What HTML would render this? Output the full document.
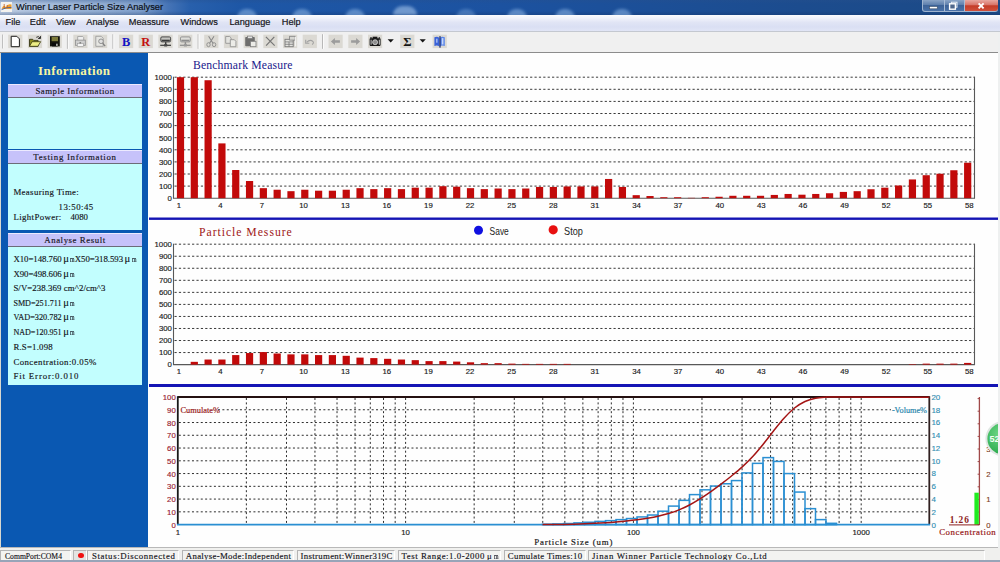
<!DOCTYPE html>
<html><head><meta charset="utf-8"><title>Winner Laser Particle Size Analyser</title>
<style>
html,body{margin:0;padding:0;}
body{width:1000px;height:562px;overflow:hidden;position:relative;background:#fefefe;font-family:"Liberation Sans",sans-serif;}
.abs{position:absolute;}
#title{left:0;top:0;width:1000px;height:14.6px;overflow:hidden;background:linear-gradient(90deg,#c2d0e4 0px,#a9bedc 40px,#93aed3 100px,#7f9fcb 140px,#4674b6 168px,#2860ac 190px,#1e57a6 240px,#1c52a0 500px,#1c4c8e 800px,#1c4a86 1000px);}
#title:before{content:"";position:absolute;left:0;top:0;width:1000px;height:14.6px;background:linear-gradient(180deg,rgba(40,80,140,.35) 0,rgba(40,80,140,0) 4px,rgba(20,50,100,0) 11px,rgba(20,50,100,.3) 14.6px)}
#title .cap{position:absolute;left:16px;top:1.4px;font-size:9.26px;line-height:13px;color:#0c1118;white-space:nowrap;-webkit-text-stroke:0.2px #0c1118}
.blob{position:absolute;top:8.5px;width:20px;height:9px;border-radius:9px 9px 0 0;background:#86b0e2;filter:blur(1.6px);opacity:.6}
#ico svg{display:block}
#ico{position:absolute;left:1px;top:2.4px;width:11px;height:9.6px;background:#f4f2ee;overflow:hidden}
#wb{position:absolute;left:922px;top:0;width:75.5px;height:12px;border-radius:0 0 3px 3px;border:1px solid #9fb4cf;border-top:0;box-sizing:border-box;background:linear-gradient(180deg,#8aa4c6 0,#5c7eac 45%,#3d6398 50%,#4a72a8 100%)}
#wb .cl{position:absolute;left:41.5px;top:0;width:33px;height:11px;border-radius:0 0 3px 0;background:linear-gradient(180deg,#e8a8a0 0,#d87468 45%,#c43c28 52%,#d0503a 100%)}
#wb i{position:absolute;top:0;width:1px;height:11px;background:#a8bcd6}
#rb{left:998.4px;top:32px;width:1.6px;height:516px;background:#eef0f0}
#menu{left:0;top:15px;width:1000px;height:16px;background:linear-gradient(180deg,#fbfcfe 0,#f1f3fb 20%,#e1e5f5 45%,#dadff3 75%,#e1e5f6 100%);border-bottom:1px solid #c4c8d0;box-sizing:content-box}
#menu span{position:absolute;top:1.1px;font-size:9.2px;line-height:13px;color:#16161a;white-space:nowrap;-webkit-text-stroke:0.2px #16161a}
#tool{left:0;top:32px;width:1000px;height:20px;background:#f0f0f0;border-bottom:1px solid #8c8c8c}
.tb{position:absolute;top:2.5px;width:14px;height:14px;background:#dcdad6;}
.sep{position:absolute;top:2px;width:1px;height:16px;background:#a8a8a8;}
#left{left:0;top:52.5px;width:148.4px;height:494px;background:#0a58b2;border-left:1.6px solid #d8d8d0;box-sizing:border-box}
.hd{position:absolute;left:8px;width:134px;height:14.4px;background:#c6c2fa;border-top:1px solid #eceaff;border-bottom:1px solid #6c6c78;box-sizing:border-box;text-align:center}
.cy{position:absolute;left:8px;width:134px;background:#c2fefe;}
.t,.hd span,.sb span{font-family:"Liberation Serif","Noto Serif CJK SC",serif;font-size:8.8px;line-height:11px;color:#141420;white-space:nowrap;-webkit-text-stroke:0.14px #141420}
.t{position:absolute;}
.hd>span{display:block;line-height:12.6px}
.mu{display:inline-block;width:8.78px;letter-spacing:0;text-align:center;font-family:"Liberation Serif",serif;font-size:10.6px;line-height:9px}
.m1{display:inline-block;width:4.39px;transform:scaleX(.66);transform-origin:0 50%}
#inf{position:absolute;left:38.1px;top:63.3px;font-family:"Liberation Serif",serif;font-weight:bold;font-size:13px;letter-spacing:0.41px;color:#f6f6a2;line-height:16px;white-space:nowrap}
#status{left:0;top:547px;width:1000px;height:15px;background:#f0f0ee;border-top:1px solid #b8b8b8;box-sizing:border-box}
.sb{position:absolute;top:2px;height:10.5px;border:1px solid #b4b4b4;border-right-color:#fff;border-bottom-color:#fff;box-sizing:border-box;background:#f3f3f1}
.sb>span{position:absolute;top:-0.2px}
#botline{left:0;top:560px;width:1000px;height:2px;background:#98a4b8}
svg text{font-family:"Liberation Sans",sans-serif}
.gd{stroke:#3a3a3a;stroke-width:1;stroke-dasharray:2.2 2.19}
.gd2{stroke:#2c2c2c;stroke-width:1;stroke-dasharray:2 2.39}
.ax{stroke:#585858;stroke-width:1.1}
.yl{font-size:7.8px;text-anchor:end;fill:#202020;stroke:#202020;stroke-width:0.15px}
.xl{font-size:7.8px;text-anchor:middle;fill:#202020;stroke:#202020;stroke-width:0.15px}
.vl{font-size:8px;fill:#2f8cb0;stroke:#2f8cb0;stroke-width:.12px}
.cl{font-size:7.8px;fill:#7c3c24;stroke:#7c3c24;stroke-width:.12px}
.cv{font:bold 9.4px "Liberation Serif",serif !important;fill:#8c1c1c}
.btn{font-size:10.8px;fill:#1c1c1c}
.ttl{font-family:"Liberation Serif",serif !important;font-size:11.7px}
.sm{font-family:"Liberation Serif",serif !important;font-size:8.8px}
.hb{fill:none;stroke:#2a8fd2;stroke-width:1.5}
</style></head>
<body>
<div id="title" class="abs">
<div class="blob" style="left:237px"></div><div class="blob" style="left:292px"></div><div class="blob" style="left:345px"></div><div class="blob" style="left:393px;width:24px;top:6px;background:#a6c6ec"></div><div class="blob" style="left:456px;opacity:.4"></div><div class="blob" style="left:507px"></div><div class="blob" style="left:555px"></div><div class="blob" style="left:612px"></div>
<div id="ico"><svg width="11" height="9.6" viewBox="0 0 11 9.6"><path d="M0.5,6.8 q2.4,-5.4 4.4,-1.6 q1.6,-3.8 5.6,-2.6 v4.4 h-6 z" fill="#f0a030"/><path d="M0.6,7.6 q4,-2.4 9.8,-2.2" stroke="#3a5ea8" stroke-width="0.9" fill="none"/><path d="M3.2,2 v4 M6.2,3 v3" stroke="#c05a20" stroke-width="0.8"/></svg></div>
<div class="cap">Winner Laser Particle Size Analyser</div>
<div id="wb"><i style="left:20.5px"></i><i style="left:41px"></i><div class="cl"></div>
<svg style="position:absolute;left:0;top:0" width="75" height="12" viewBox="0 0 75 12"><rect x="6.6" y="6.6" width="7.6" height="2.2" fill="#fff" stroke="#3a4a60" stroke-width="0.5"/><rect x="28.4" y="2.2" width="5.6" height="5" fill="none" stroke="#e8eef6" stroke-width="1"/><rect x="26.6" y="3.8" width="5.8" height="5.4" fill="#50688c" stroke="#fff" stroke-width="1.4"/><path d="M55.6,3.4 l5,5 M60.6,3.4 l-5,5" stroke="#fff" stroke-width="1.9"/></svg></div>
</div>
<div id="menu" class="abs"><span style="left:5.6px">File</span><span style="left:29.8px">Edit</span><span style="left:56px">View</span><span style="left:86.3px">Analyse</span><span style="left:128.8px">Meassure</span><span style="left:180.5px">Windows</span><span style="left:229.5px">Language</span><span style="left:281.8px">Help</span></div>
<div id="tool" class="abs"><!--TOOL--></div>
<div id="left" class="abs"></div>
<div id="inf">Information</div>
<div class="hd" style="top:83.6px"><span><span style="letter-spacing:0.47px">Sample Information</span></span></div>
<div class="cy" style="top:98px;height:50.6px"></div>
<div class="hd" style="top:150px"><span><span style="letter-spacing:0.71px">Testing Information</span></span></div>
<div class="cy" style="top:164.4px;height:65.2px"></div>
<div class="hd" style="top:232.8px"><span><span style="letter-spacing:0.57px">Analyse Result</span></span></div>
<div class="cy" style="top:247.2px;height:137.8px"></div>
<div class="t" style="left:13.4px;top:186.6px"><span style="letter-spacing:0.36px">Measuring Time:</span></div>
<div class="t" style="left:58.6px;top:201.7px"><span style="letter-spacing:0.48px">13:50:45</span></div>
<div class="t" style="left:13.4px;top:211.9px"><span style="letter-spacing:0.39px">LightPower:</span><span style="display:inline-block;width:8.78px"></span><span style="letter-spacing:-0.01px">4080</span></div>
<div class="t" style="left:13.4px;top:254.2px"><span style="letter-spacing:-0.04px">X10=148.760</span><span class="mu">μ</span><span class="m1">m</span><span style="letter-spacing:-0.04px">X50=318.593</span><span class="mu">μ</span><span class="m1">m</span></div>
<div class="t" style="left:13.4px;top:268.6px"><span style="letter-spacing:-0.04px">X90=498.606</span><span class="mu">μ</span><span class="m1">m</span></div>
<div class="t" style="left:13.4px;top:283.3px"><span style="letter-spacing:0.08px">S/V=238.369 cm^2/cm^3</span></div>
<div class="t" style="left:13.4px;top:298px"><span style="font-size:8.12px">SMD=251.711</span><span class="mu">μ</span><span class="m1">m</span></div>
<div class="t" style="left:13.4px;top:312.4px"><span style="font-size:8.25px">VAD=320.782</span><span class="mu">μ</span><span class="m1">m</span></div>
<div class="t" style="left:13.4px;top:327.2px"><span style="font-size:8.07px">NAD=120.951</span><span class="mu">μ</span><span class="m1">m</span></div>
<div class="t" style="left:13.4px;top:341.9px"><span style="letter-spacing:0.20px">R.S=1.098</span></div>
<div class="t" style="left:13.4px;top:356.6px"><span style="letter-spacing:0.44px">Concentration:0.05%</span></div>
<div class="t" style="left:13.4px;top:371.3px"><span style="letter-spacing:0.87px">Fit Error:0.010</span></div>
<svg class="abs" style="left:0;top:0" width="1000" height="562" viewBox="0 0 1000 562">
<defs><radialGradient id="gb" cx="40%" cy="35%" r="70%"><stop offset="0" stop-color="#6fd886"/><stop offset="1" stop-color="#27a84a"/></radialGradient></defs>
<g>
<line x1="174.5" y1="77.2" x2="974.5" y2="77.2" class="gd"/>
<line x1="174.5" y1="89.3" x2="974.5" y2="89.3" class="gd"/>
<line x1="174.5" y1="101.4" x2="974.5" y2="101.4" class="gd"/>
<line x1="174.5" y1="113.5" x2="974.5" y2="113.5" class="gd"/>
<line x1="174.5" y1="125.6" x2="974.5" y2="125.6" class="gd"/>
<line x1="174.5" y1="137.7" x2="974.5" y2="137.7" class="gd"/>
<line x1="174.5" y1="149.8" x2="974.5" y2="149.8" class="gd"/>
<line x1="174.5" y1="161.9" x2="974.5" y2="161.9" class="gd"/>
<line x1="174.5" y1="174" x2="974.5" y2="174" class="gd"/>
<line x1="174.5" y1="186.1" x2="974.5" y2="186.1" class="gd"/>
<line x1="173.5" y1="76.7" x2="173.5" y2="198.7" class="ax"/>
<line x1="974.5" y1="76.7" x2="974.5" y2="198.7" class="ax"/>
<line x1="173.5" y1="198.2" x2="974.5" y2="198.2" class="ax"/>
<rect x="176.9" y="77.2" width="7.2" height="121" fill="#c20a0a"/>
<rect x="190.71" y="77.2" width="7.2" height="121" fill="#c20a0a"/>
<rect x="204.52" y="80.23" width="7.2" height="117.97" fill="#c20a0a"/>
<rect x="218.33" y="143.39" width="7.2" height="54.81" fill="#c20a0a"/>
<rect x="232.14" y="170.01" width="7.2" height="28.19" fill="#c20a0a"/>
<rect x="245.95" y="181.02" width="7.2" height="17.18" fill="#c20a0a"/>
<rect x="259.76" y="188.16" width="7.2" height="10.04" fill="#c20a0a"/>
<rect x="273.57" y="189.73" width="7.2" height="8.47" fill="#c20a0a"/>
<rect x="287.38" y="191.18" width="7.2" height="7.02" fill="#c20a0a"/>
<rect x="301.19" y="189.73" width="7.2" height="8.47" fill="#c20a0a"/>
<rect x="315" y="190.7" width="7.2" height="7.5" fill="#c20a0a"/>
<rect x="328.81" y="190.7" width="7.2" height="7.5" fill="#c20a0a"/>
<rect x="342.62" y="189.73" width="7.2" height="8.47" fill="#c20a0a"/>
<rect x="356.43" y="188.16" width="7.2" height="10.04" fill="#c20a0a"/>
<rect x="370.24" y="189.12" width="7.2" height="9.07" fill="#c20a0a"/>
<rect x="384.05" y="188.16" width="7.2" height="10.04" fill="#c20a0a"/>
<rect x="397.86" y="189.12" width="7.2" height="9.07" fill="#c20a0a"/>
<rect x="411.67" y="187.67" width="7.2" height="10.53" fill="#c20a0a"/>
<rect x="425.48" y="187.67" width="7.2" height="10.53" fill="#c20a0a"/>
<rect x="439.29" y="186.22" width="7.2" height="11.98" fill="#c20a0a"/>
<rect x="453.1" y="186.7" width="7.2" height="11.49" fill="#c20a0a"/>
<rect x="466.91" y="188.16" width="7.2" height="10.04" fill="#c20a0a"/>
<rect x="480.72" y="189.12" width="7.2" height="9.07" fill="#c20a0a"/>
<rect x="494.53" y="188.52" width="7.2" height="9.68" fill="#c20a0a"/>
<rect x="508.34" y="189.12" width="7.2" height="9.07" fill="#c20a0a"/>
<rect x="522.15" y="188.52" width="7.2" height="9.68" fill="#c20a0a"/>
<rect x="535.96" y="186.95" width="7.2" height="11.25" fill="#c20a0a"/>
<rect x="549.77" y="186.95" width="7.2" height="11.25" fill="#c20a0a"/>
<rect x="563.58" y="186.46" width="7.2" height="11.74" fill="#c20a0a"/>
<rect x="577.39" y="186.46" width="7.2" height="11.74" fill="#c20a0a"/>
<rect x="591.2" y="186.46" width="7.2" height="11.74" fill="#c20a0a"/>
<rect x="605.01" y="178.96" width="7.2" height="19.24" fill="#c20a0a"/>
<rect x="618.82" y="186.95" width="7.2" height="11.25" fill="#c20a0a"/>
<rect x="632.63" y="195.17" width="7.2" height="3.02" fill="#c20a0a"/>
<rect x="646.44" y="196.02" width="7.2" height="2.18" fill="#c20a0a"/>
<rect x="660.25" y="197.23" width="7.2" height="0.97" fill="#c20a0a"/>
<rect x="674.06" y="197.23" width="7.2" height="0.97" fill="#c20a0a"/>
<rect x="687.87" y="197.84" width="7.2" height="0.36" fill="#c20a0a"/>
<rect x="701.68" y="197.23" width="7.2" height="0.97" fill="#c20a0a"/>
<rect x="715.49" y="196.75" width="7.2" height="1.45" fill="#c20a0a"/>
<rect x="729.3" y="195.78" width="7.2" height="2.42" fill="#c20a0a"/>
<rect x="743.11" y="195.78" width="7.2" height="2.42" fill="#c20a0a"/>
<rect x="756.92" y="195.78" width="7.2" height="2.42" fill="#c20a0a"/>
<rect x="770.73" y="194.93" width="7.2" height="3.27" fill="#c20a0a"/>
<rect x="784.54" y="193.96" width="7.2" height="4.23" fill="#c20a0a"/>
<rect x="798.35" y="194.69" width="7.2" height="3.51" fill="#c20a0a"/>
<rect x="812.16" y="193.96" width="7.2" height="4.23" fill="#c20a0a"/>
<rect x="825.97" y="193.24" width="7.2" height="4.96" fill="#c20a0a"/>
<rect x="839.78" y="191.91" width="7.2" height="6.29" fill="#c20a0a"/>
<rect x="853.59" y="191.18" width="7.2" height="7.02" fill="#c20a0a"/>
<rect x="867.4" y="189.25" width="7.2" height="8.95" fill="#c20a0a"/>
<rect x="881.21" y="187.67" width="7.2" height="10.53" fill="#c20a0a"/>
<rect x="895.02" y="185.5" width="7.2" height="12.7" fill="#c20a0a"/>
<rect x="908.83" y="179.44" width="7.2" height="18.75" fill="#c20a0a"/>
<rect x="922.64" y="175.21" width="7.2" height="22.99" fill="#c20a0a"/>
<rect x="936.45" y="173.76" width="7.2" height="24.44" fill="#c20a0a"/>
<rect x="950.26" y="170.25" width="7.2" height="27.95" fill="#c20a0a"/>
<rect x="964.07" y="162.75" width="7.2" height="35.45" fill="#c20a0a"/>
<text x="171.9" y="80" class="yl">1000</text>
<text x="171.9" y="92.1" class="yl">900</text>
<text x="171.9" y="104.2" class="yl">800</text>
<text x="171.9" y="116.3" class="yl">700</text>
<text x="171.9" y="128.4" class="yl">600</text>
<text x="171.9" y="140.5" class="yl">500</text>
<text x="171.9" y="152.6" class="yl">400</text>
<text x="171.9" y="164.7" class="yl">300</text>
<text x="171.9" y="176.8" class="yl">200</text>
<text x="171.9" y="188.9" class="yl">100</text>
<text x="171.9" y="201" class="yl">0</text>
<text x="178.8" y="207.8" class="xl">1</text>
<text x="220.41" y="207.8" class="xl">4</text>
<text x="262.02" y="207.8" class="xl">7</text>
<text x="303.63" y="207.8" class="xl">10</text>
<text x="345.24" y="207.8" class="xl">13</text>
<text x="386.85" y="207.8" class="xl">16</text>
<text x="428.46" y="207.8" class="xl">19</text>
<text x="470.07" y="207.8" class="xl">22</text>
<text x="511.68" y="207.8" class="xl">25</text>
<text x="553.29" y="207.8" class="xl">28</text>
<text x="594.9" y="207.8" class="xl">31</text>
<text x="636.51" y="207.8" class="xl">34</text>
<text x="678.12" y="207.8" class="xl">37</text>
<text x="719.73" y="207.8" class="xl">40</text>
<text x="761.34" y="207.8" class="xl">43</text>
<text x="802.95" y="207.8" class="xl">46</text>
<text x="844.56" y="207.8" class="xl">49</text>
<text x="886.17" y="207.8" class="xl">52</text>
<text x="927.78" y="207.8" class="xl">55</text>
<text x="969.39" y="207.8" class="xl">58</text>
<text x="193" y="69" class="ttl" fill="#20208c" style="letter-spacing:0.15px">Benchmark Measure</text>
</g>
<g>
<line x1="174.5" y1="244.2" x2="974.5" y2="244.2" class="gd"/>
<line x1="174.5" y1="256.24" x2="974.5" y2="256.24" class="gd"/>
<line x1="174.5" y1="268.28" x2="974.5" y2="268.28" class="gd"/>
<line x1="174.5" y1="280.32" x2="974.5" y2="280.32" class="gd"/>
<line x1="174.5" y1="292.36" x2="974.5" y2="292.36" class="gd"/>
<line x1="174.5" y1="304.4" x2="974.5" y2="304.4" class="gd"/>
<line x1="174.5" y1="316.44" x2="974.5" y2="316.44" class="gd"/>
<line x1="174.5" y1="328.48" x2="974.5" y2="328.48" class="gd"/>
<line x1="174.5" y1="340.52" x2="974.5" y2="340.52" class="gd"/>
<line x1="174.5" y1="352.56" x2="974.5" y2="352.56" class="gd"/>
<line x1="173.5" y1="243.7" x2="173.5" y2="365.1" class="ax"/>
<line x1="974.5" y1="243.7" x2="974.5" y2="365.1" class="ax"/>
<line x1="173.5" y1="364.6" x2="974.5" y2="364.6" class="ax"/>
<rect x="190.71" y="361.83" width="7.2" height="2.77" fill="#c20a0a"/>
<rect x="204.52" y="359.54" width="7.2" height="5.06" fill="#c20a0a"/>
<rect x="218.33" y="359.54" width="7.2" height="5.06" fill="#c20a0a"/>
<rect x="232.14" y="355.09" width="7.2" height="9.51" fill="#c20a0a"/>
<rect x="245.95" y="353.04" width="7.2" height="11.56" fill="#c20a0a"/>
<rect x="259.76" y="352.08" width="7.2" height="12.52" fill="#c20a0a"/>
<rect x="273.57" y="353.52" width="7.2" height="11.08" fill="#c20a0a"/>
<rect x="287.38" y="354.37" width="7.2" height="10.23" fill="#c20a0a"/>
<rect x="301.19" y="354.37" width="7.2" height="10.23" fill="#c20a0a"/>
<rect x="315" y="355.09" width="7.2" height="9.51" fill="#c20a0a"/>
<rect x="328.81" y="355.09" width="7.2" height="9.51" fill="#c20a0a"/>
<rect x="342.62" y="355.81" width="7.2" height="8.79" fill="#c20a0a"/>
<rect x="356.43" y="357.62" width="7.2" height="6.98" fill="#c20a0a"/>
<rect x="370.24" y="358.1" width="7.2" height="6.5" fill="#c20a0a"/>
<rect x="384.05" y="358.82" width="7.2" height="5.78" fill="#c20a0a"/>
<rect x="397.86" y="359.54" width="7.2" height="5.06" fill="#c20a0a"/>
<rect x="411.67" y="360.15" width="7.2" height="4.45" fill="#c20a0a"/>
<rect x="425.48" y="361.11" width="7.2" height="3.49" fill="#c20a0a"/>
<rect x="439.29" y="361.11" width="7.2" height="3.49" fill="#c20a0a"/>
<rect x="453.1" y="361.59" width="7.2" height="3.01" fill="#c20a0a"/>
<rect x="466.91" y="362.31" width="7.2" height="2.29" fill="#c20a0a"/>
<rect x="480.72" y="363.16" width="7.2" height="1.44" fill="#c20a0a"/>
<rect x="494.53" y="363.16" width="7.2" height="1.44" fill="#c20a0a"/>
<rect x="508.34" y="363.64" width="7.2" height="0.96" fill="#c20a0a"/>
<rect x="522.15" y="363.88" width="7.2" height="0.72" fill="#c20a0a"/>
<rect x="535.96" y="363.88" width="7.2" height="0.72" fill="#c20a0a"/>
<rect x="549.77" y="363.88" width="7.2" height="0.72" fill="#c20a0a"/>
<rect x="563.58" y="363.88" width="7.2" height="0.72" fill="#c20a0a"/>
<rect x="908.83" y="364.12" width="7.2" height="0.48" fill="#c20a0a"/>
<rect x="922.64" y="363.64" width="7.2" height="0.96" fill="#c20a0a"/>
<rect x="936.45" y="363.64" width="7.2" height="0.96" fill="#c20a0a"/>
<rect x="950.26" y="363.64" width="7.2" height="0.96" fill="#c20a0a"/>
<rect x="964.07" y="362.91" width="7.2" height="1.69" fill="#c20a0a"/>
<text x="171.9" y="247" class="yl">1000</text>
<text x="171.9" y="259.04" class="yl">900</text>
<text x="171.9" y="271.08" class="yl">800</text>
<text x="171.9" y="283.12" class="yl">700</text>
<text x="171.9" y="295.16" class="yl">600</text>
<text x="171.9" y="307.2" class="yl">500</text>
<text x="171.9" y="319.24" class="yl">400</text>
<text x="171.9" y="331.28" class="yl">300</text>
<text x="171.9" y="343.32" class="yl">200</text>
<text x="171.9" y="355.36" class="yl">100</text>
<text x="171.9" y="367.4" class="yl">0</text>
<text x="178.8" y="374.2" class="xl">1</text>
<text x="220.41" y="374.2" class="xl">4</text>
<text x="262.02" y="374.2" class="xl">7</text>
<text x="303.63" y="374.2" class="xl">10</text>
<text x="345.24" y="374.2" class="xl">13</text>
<text x="386.85" y="374.2" class="xl">16</text>
<text x="428.46" y="374.2" class="xl">19</text>
<text x="470.07" y="374.2" class="xl">22</text>
<text x="511.68" y="374.2" class="xl">25</text>
<text x="553.29" y="374.2" class="xl">28</text>
<text x="594.9" y="374.2" class="xl">31</text>
<text x="636.51" y="374.2" class="xl">34</text>
<text x="678.12" y="374.2" class="xl">37</text>
<text x="719.73" y="374.2" class="xl">40</text>
<text x="761.34" y="374.2" class="xl">43</text>
<text x="802.95" y="374.2" class="xl">46</text>
<text x="844.56" y="374.2" class="xl">49</text>
<text x="886.17" y="374.2" class="xl">52</text>
<text x="927.78" y="374.2" class="xl">55</text>
<text x="969.39" y="374.2" class="xl">58</text>
<text x="199" y="235.5" class="ttl" fill="#a01818" style="letter-spacing:0.97px">Particle Messure</text>
</g>
<rect x="149" y="217.5" width="850" height="2.4" fill="#1414b4"/>
<rect x="149" y="384" width="850" height="3" fill="#1414b4"/>
<circle cx="478.5" cy="230.2" r="4.5" fill="#1010e0"/>
<text x="489.6" y="234.6" class="btn" textLength="19.2" lengthAdjust="spacingAndGlyphs">Save</text>
<circle cx="553.2" cy="229.8" r="4.6" fill="#e81010"/>
<text x="564.1" y="234.6" class="btn" textLength="18.8" lengthAdjust="spacingAndGlyphs">Stop</text>
<line x1="178.8" y1="511.84" x2="928.3" y2="511.84" class="gd2"/>
<line x1="178.8" y1="499.08" x2="928.3" y2="499.08" class="gd2"/>
<line x1="178.8" y1="486.32" x2="928.3" y2="486.32" class="gd2"/>
<line x1="178.8" y1="473.56" x2="928.3" y2="473.56" class="gd2"/>
<line x1="178.8" y1="460.8" x2="928.3" y2="460.8" class="gd2"/>
<line x1="178.8" y1="448.04" x2="928.3" y2="448.04" class="gd2"/>
<line x1="178.8" y1="435.28" x2="928.3" y2="435.28" class="gd2"/>
<line x1="178.8" y1="422.52" x2="928.3" y2="422.52" class="gd2"/>
<line x1="218" y1="409.76" x2="891" y2="409.76" class="gd2"/>
<line x1="246.37" y1="398" x2="246.37" y2="523.6" class="gd2"/>
<line x1="286.49" y1="398" x2="286.49" y2="523.6" class="gd2"/>
<line x1="314.95" y1="398" x2="314.95" y2="523.6" class="gd2"/>
<line x1="337.03" y1="398" x2="337.03" y2="523.6" class="gd2"/>
<line x1="355.06" y1="398" x2="355.06" y2="523.6" class="gd2"/>
<line x1="370.31" y1="398" x2="370.31" y2="523.6" class="gd2"/>
<line x1="383.52" y1="398" x2="383.52" y2="523.6" class="gd2"/>
<line x1="395.18" y1="398" x2="395.18" y2="523.6" class="gd2"/>
<line x1="405.6" y1="398" x2="405.6" y2="523.6" class="gd2"/>
<line x1="474.17" y1="398" x2="474.17" y2="523.6" class="gd2"/>
<line x1="514.29" y1="398" x2="514.29" y2="523.6" class="gd2"/>
<line x1="542.75" y1="398" x2="542.75" y2="523.6" class="gd2"/>
<line x1="564.83" y1="398" x2="564.83" y2="523.6" class="gd2"/>
<line x1="582.86" y1="398" x2="582.86" y2="523.6" class="gd2"/>
<line x1="598.11" y1="398" x2="598.11" y2="523.6" class="gd2"/>
<line x1="611.32" y1="398" x2="611.32" y2="523.6" class="gd2"/>
<line x1="622.98" y1="398" x2="622.98" y2="523.6" class="gd2"/>
<line x1="633.4" y1="398" x2="633.4" y2="523.6" class="gd2"/>
<line x1="701.97" y1="398" x2="701.97" y2="523.6" class="gd2"/>
<line x1="742.09" y1="398" x2="742.09" y2="523.6" class="gd2"/>
<line x1="770.55" y1="398" x2="770.55" y2="523.6" class="gd2"/>
<line x1="792.63" y1="398" x2="792.63" y2="523.6" class="gd2"/>
<line x1="810.66" y1="398" x2="810.66" y2="523.6" class="gd2"/>
<line x1="825.91" y1="398" x2="825.91" y2="523.6" class="gd2"/>
<line x1="839.12" y1="398" x2="839.12" y2="523.6" class="gd2"/>
<line x1="850.78" y1="398" x2="850.78" y2="523.6" class="gd2"/>
<line x1="861.2" y1="398" x2="861.2" y2="523.6" class="gd2"/>
<rect x="542.5" y="524.28" width="10.5" height="0.32" class="hb"/>
<rect x="553" y="523.96" width="10.5" height="0.64" class="hb"/>
<rect x="563.5" y="523.52" width="10.5" height="1.08" class="hb"/>
<rect x="574" y="522.88" width="10.5" height="1.72" class="hb"/>
<rect x="584.5" y="522.24" width="10.5" height="2.36" class="hb"/>
<rect x="595" y="521.41" width="10.5" height="3.19" class="hb"/>
<rect x="605.5" y="520.64" width="10.5" height="3.96" class="hb"/>
<rect x="616" y="519.62" width="10.5" height="4.98" class="hb"/>
<rect x="626.5" y="518.54" width="10.5" height="6.06" class="hb"/>
<rect x="637" y="516.94" width="10.5" height="7.66" class="hb"/>
<rect x="647.5" y="515.03" width="10.5" height="9.57" class="hb"/>
<rect x="658" y="511.2" width="10.5" height="13.4" class="hb"/>
<rect x="668.5" y="506.1" width="10.5" height="18.5" class="hb"/>
<rect x="679" y="500.36" width="10.5" height="24.24" class="hb"/>
<rect x="689.5" y="494.61" width="10.5" height="29.99" class="hb"/>
<rect x="700" y="489.83" width="10.5" height="34.77" class="hb"/>
<rect x="710.5" y="486.06" width="10.5" height="38.54" class="hb"/>
<rect x="721" y="483.77" width="10.5" height="40.83" class="hb"/>
<rect x="731.5" y="480.58" width="10.5" height="44.02" class="hb"/>
<rect x="742" y="472.92" width="10.5" height="51.68" class="hb"/>
<rect x="752.5" y="463.35" width="10.5" height="61.25" class="hb"/>
<rect x="763" y="457.61" width="10.5" height="66.99" class="hb"/>
<rect x="773.5" y="461.44" width="10.5" height="63.16" class="hb"/>
<rect x="784" y="473.56" width="10.5" height="51.04" class="hb"/>
<rect x="794.5" y="492.06" width="10.5" height="32.54" class="hb"/>
<rect x="805" y="508.65" width="10.5" height="15.95" class="hb"/>
<rect x="815.5" y="519.62" width="10.5" height="4.98" class="hb"/>
<rect x="826" y="523.32" width="10.5" height="1.28" class="hb"/>
<line x1="177.8" y1="397" x2="929.3" y2="397" stroke="#241010" stroke-width="1.8"/>
<line x1="177.8" y1="396.2" x2="177.8" y2="524.6" stroke="#181818" stroke-width="1.8"/>
<line x1="929.3" y1="396.2" x2="929.3" y2="524.6" stroke="#302020" stroke-width="1.8"/>
<line x1="177.0" y1="524.6" x2="930.0999999999999" y2="524.6" stroke="#2a8fd2" stroke-width="1.8"/>
<path d="M542.5,524.6 C544.25,524.59 549.5,524.57 553,524.54 C556.5,524.5 560,524.47 563.5,524.41 C567,524.35 570.5,524.28 574,524.19 C577.5,524.1 581,523.98 584.5,523.84 C588,523.71 591.5,523.55 595,523.37 C598.5,523.18 602,522.97 605.5,522.73 C609,522.49 612.5,522.23 616,521.93 C619.5,521.63 623,521.3 626.5,520.93 C630,520.56 633.5,520.17 637,519.71 C640.5,519.25 644,518.75 647.5,518.17 C651,517.6 654.5,517.02 658,516.25 C661.5,515.48 665,514.63 668.5,513.56 C672,512.49 675.5,511.27 679,509.84 C682.5,508.4 686,506.78 689.5,504.96 C693,503.15 696.5,501.1 700,498.93 C703.5,496.76 707,494.4 710.5,491.94 C714,489.49 717.5,486.86 721,484.2 C724.5,481.54 728,478.83 731.5,475.99 C735,473.14 738.5,470.34 742,467.14 C745.5,463.93 749,460.53 752.5,456.75 C756,452.96 759.5,448.73 763,444.43 C766.5,440.14 770,435.33 773.5,430.97 C777,426.6 780.5,422.09 784,418.27 C787.5,414.44 791,410.81 794.5,408.01 C798,405.2 801.5,403.09 805,401.46 C808.5,399.84 812,398.96 815.5,398.26 C819,397.56 822.5,397.47 826,397.26 C829.5,397.05 819.28,396.99 836.5,397 C853.72,397.01 913.83,397.25 929.3,397.3" fill="none" stroke="#a41414" stroke-width="1.5"/>
<text x="175.8" y="527.7" class="yl" style="fill:#982030;stroke:#982030">0</text>
<text x="175.8" y="514.94" class="yl" style="fill:#982030;stroke:#982030">10</text>
<text x="175.8" y="502.18" class="yl" style="fill:#982030;stroke:#982030">20</text>
<text x="175.8" y="489.42" class="yl" style="fill:#982030;stroke:#982030">30</text>
<text x="175.8" y="476.66" class="yl" style="fill:#982030;stroke:#982030">40</text>
<text x="175.8" y="463.9" class="yl" style="fill:#982030;stroke:#982030">50</text>
<text x="175.8" y="451.14" class="yl" style="fill:#982030;stroke:#982030">60</text>
<text x="175.8" y="438.38" class="yl" style="fill:#982030;stroke:#982030">70</text>
<text x="175.8" y="425.62" class="yl" style="fill:#982030;stroke:#982030">80</text>
<text x="175.8" y="412.86" class="yl" style="fill:#982030;stroke:#982030">90</text>
<text x="175.8" y="400.1" class="yl" style="fill:#982030;stroke:#982030">100</text>
<text x="931.4" y="527.5" class="vl">0</text>
<text x="931.4" y="514.74" class="vl">2</text>
<text x="931.4" y="501.98" class="vl">4</text>
<text x="931.4" y="489.22" class="vl">6</text>
<text x="931.4" y="476.46" class="vl">8</text>
<text x="931.4" y="463.7" class="vl">10</text>
<text x="931.4" y="450.94" class="vl">12</text>
<text x="931.4" y="438.18" class="vl">14</text>
<text x="931.4" y="425.42" class="vl">16</text>
<text x="931.4" y="412.66" class="vl">18</text>
<text x="931.4" y="399.9" class="vl">20</text>
<text x="177.8" y="534.8" class="xl">1</text>
<text x="405.6" y="534.8" class="xl">10</text>
<text x="633.4" y="534.8" class="xl">100</text>
<text x="861.2" y="534.8" class="xl">1000</text>
<text x="180.5" y="412.6" class="sm" fill="#982020" stroke="#982020" stroke-width="0.2" textLength="39.5" lengthAdjust="spacingAndGlyphs">Cumulate%</text>
<text x="891.88" y="412.6" class="sm" fill="#2a86ac" stroke="#2a86ac" stroke-width="0.2" textLength="35.1" lengthAdjust="spacingAndGlyphs">-Volume%</text>
<text x="534.2" y="545.4" class="sm" fill="#202020" stroke="#202020" stroke-width="0.2" style="letter-spacing:0.86px">Particle Size (um)</text>
<line x1="979.4" y1="397" x2="979.4" y2="525" stroke="#a04848" stroke-width="1.3"/>
<line x1="977.6" y1="524.6" x2="979.4" y2="524.6" stroke="#a04848" stroke-width="1"/>
<line x1="977.6" y1="512" x2="979.4" y2="512" stroke="#a04848" stroke-width="1"/>
<line x1="977.6" y1="499.4" x2="979.4" y2="499.4" stroke="#a04848" stroke-width="1"/>
<line x1="977.6" y1="486.8" x2="979.4" y2="486.8" stroke="#a04848" stroke-width="1"/>
<line x1="977.6" y1="474.2" x2="979.4" y2="474.2" stroke="#a04848" stroke-width="1"/>
<line x1="977.6" y1="461.6" x2="979.4" y2="461.6" stroke="#a04848" stroke-width="1"/>
<line x1="977.6" y1="449" x2="979.4" y2="449" stroke="#a04848" stroke-width="1"/>
<line x1="977.6" y1="436.4" x2="979.4" y2="436.4" stroke="#a04848" stroke-width="1"/>
<line x1="977.6" y1="423.8" x2="979.4" y2="423.8" stroke="#a04848" stroke-width="1"/>
<line x1="977.6" y1="411.2" x2="979.4" y2="411.2" stroke="#a04848" stroke-width="1"/>
<line x1="977.6" y1="398.6" x2="979.4" y2="398.6" stroke="#a04848" stroke-width="1"/>
<rect x="974.4" y="492.7" width="4.4" height="32" fill="#20ec20"/>
<text x="986.3" y="527.6" class="cl">0</text>
<text x="986.3" y="502.4" class="cl">1</text>
<text x="986.3" y="477.2" class="cl">2</text>
<text x="986.3" y="452" class="cl">3</text>
<text x="949.8" y="522.7" class="cv" style="letter-spacing:0.89px">1.26</text>
<line x1="949" y1="524.9" x2="979.4" y2="524.9" stroke="#8c2020" stroke-width="1"/>
<text x="939.2" y="534.6" class="sm" fill="#982020" stroke="#982020" stroke-width="0.2" style="letter-spacing:0.56px">Concentration</text>
<circle cx="1003" cy="438.7" r="17.6" fill="#dfe6e2"/>
<circle cx="1003" cy="438.7" r="15.6" fill="url(#gb)"/>
<text x="989.6" y="442" style="font:bold 9px 'Liberation Sans',sans-serif;fill:#f4fff4">52</text>
<rect x="2.2" y="34.5" width="1" height="14" fill="#b4b4b4"/><rect x="3.2" y="34.5" width="0.8" height="14" fill="#fafafa"/>
<rect x="66.9" y="34.2" width="1" height="14.6" fill="#b8b8b8"/><rect x="67.9" y="34.2" width="0.9" height="14.6" fill="#fcfcfc"/>
<rect x="112.4" y="34.2" width="1" height="14.6" fill="#b8b8b8"/><rect x="113.4" y="34.2" width="0.9" height="14.6" fill="#fcfcfc"/>
<rect x="197.6" y="34.2" width="1" height="14.6" fill="#b8b8b8"/><rect x="198.6" y="34.2" width="0.9" height="14.6" fill="#fcfcfc"/>
<rect x="322.0" y="34.2" width="1" height="14.6" fill="#b8b8b8"/><rect x="323.0" y="34.2" width="0.9" height="14.6" fill="#fcfcfc"/>
<rect x="8.2" y="34.7" width="14.2" height="13.4" fill="#dbd9d3"/>
<path d="M11.2,36.300000000000004 h5.6 l2.6,2.6 v7.8 h-8.2 z" fill="#fff" stroke="#1c1c1c" stroke-width="1"/>
<rect x="27.9" y="34.7" width="14.2" height="13.4" fill="#dbd9d3"/>
<path d="M29.5,46.300000000000004 v-7 h3.2 l1,1.1 h4.4 v5.9 z" fill="#8e8c1e" stroke="#2a2a10" stroke-width="0.8"/>
<path d="M29.5,46.300000000000004 l2.6,-4.6 h8.6 l-2.8,4.6 z" fill="#eeee84" stroke="#3a3a10" stroke-width="0.8"/>
<path d="M36.3,37.300000000000004 q2.4,-1.6 3.8,0.6 M40.5,36.1 v2.4 h-2.4" fill="none" stroke="#202020" stroke-width="0.9"/>
<rect x="47.6" y="34.7" width="14.2" height="13.4" fill="#dbd9d3"/>
<rect x="50.0" y="36.2" width="9.8" height="10.2" fill="#14140c" />
<rect x="51.6" y="37.0" width="6.4" height="4.2" fill="#7c7a3a"/>
<rect x="52.0" y="43.0" width="5.6" height="3.4" fill="#0a0a0a"/><rect x="56.2" y="43.7" width="1.4" height="2.2" fill="#d8d8d0"/>
<rect x="73.3" y="34.7" width="14.2" height="13.4" fill="#dbd9d3"/>
<path d="M77.7,40.1 v-3.6 h5 l1,1 v2.6" fill="#efefef" stroke="#9a9a9a" stroke-width="0.8"/>
<rect x="75.5" y="40.1" width="9.8" height="5.2" fill="#cfcfcf" stroke="#8e8e8e" stroke-width="0.8"/>
<rect x="77.3" y="43.300000000000004" width="6" height="3" fill="#f4f4f4" stroke="#9a9a9a" stroke-width="0.6"/>
<rect x="79.5" y="42.1" width="1.6" height="1.4" fill="#7a7a7a"/>
<rect x="93.0" y="34.7" width="14.2" height="13.4" fill="#dbd9d3"/>
<path d="M95.8,36.300000000000004 h5.4 l2,2 v8 h-7.4 z" fill="#e6e6e2" stroke="#969696" stroke-width="0.8"/>
<circle cx="101" cy="41.300000000000004" r="2.3" fill="#e0e0e0" stroke="#8a8a8a" stroke-width="0.9"/><path d="M102.6,43.1 l2.6,3" stroke="#7c7c7c" stroke-width="1.2"/>
<rect x="119.0" y="34.7" width="14.2" height="13.4" fill="#dbd9d3"/>
<text x="126.1" y="45.900000000000006" text-anchor="middle" style="font:bold 12.4px 'Liberation Serif',serif;fill:#1212c4">B</text>
<rect x="138.7" y="34.7" width="14.2" height="13.4" fill="#dbd9d3"/>
<text x="145.79999999999998" y="45.900000000000006" text-anchor="middle" style="font:bold 12.4px 'Liberation Serif',serif;fill:#c41010">R</text>
<rect x="158.4" y="34.7" width="14.2" height="13.4" fill="#dbd9d3"/>
<rect x="160.8" y="36.900000000000006" width="9.8" height="5" rx="1.2" fill="#c4c4c0" stroke="#3a3a3a" stroke-width="0.9"/>
<rect x="161.6" y="39.7" width="8.2" height="1.6" fill="#3a3a3a"/>
<rect x="165.0" y="42.1" width="1.4" height="2.6" fill="#3a3a3a"/>
<rect x="160.20000000000002" y="44.7" width="10.8" height="1.2" fill="#3a3a3a"/><rect x="164.20000000000002" y="43.900000000000006" width="3" height="2.6" fill="#4a4a4a"/>
<rect x="178.1" y="34.7" width="14.2" height="13.4" fill="#dbd9d3"/>
<rect x="180.5" y="36.900000000000006" width="9.8" height="5" rx="1.2" fill="#dededa" stroke="#8c8c8c" stroke-width="0.9"/>
<rect x="181.29999999999998" y="39.7" width="8.2" height="1.6" fill="#8c8c8c"/>
<rect x="184.7" y="42.1" width="1.4" height="2.6" fill="#8c8c8c"/>
<rect x="179.9" y="44.7" width="10.8" height="1.2" fill="#8c8c8c"/><rect x="183.9" y="43.900000000000006" width="3" height="2.6" fill="#9a9a9a"/>
<rect x="204.2" y="34.7" width="14.2" height="13.4" fill="#dbd9d3"/>
<path d="M208.6,36.300000000000004 L213.0,43.300000000000004 M214.0,36.300000000000004 L209.6,43.300000000000004" stroke="#8a8a8a" stroke-width="1.1" fill="none"/>
<ellipse cx="208.5" cy="44.7" rx="1.7" ry="2" fill="none" stroke="#8a8a8a" stroke-width="0.9"/><ellipse cx="214.1" cy="44.7" rx="1.7" ry="2" fill="none" stroke="#8a8a8a" stroke-width="0.9"/>
<rect x="223.9" y="34.7" width="14.2" height="13.4" fill="#dbd9d3"/>
<path d="M225.70000000000002,36.5 h4 l1.4,1.4 v5.4 h-5.4 z" fill="#e4e4e0" stroke="#8e8e8e" stroke-width="0.8"/>
<path d="M230.3,39.7 h4 l1.6,1.6 v5.4 h-5.6 z" fill="#ecece8" stroke="#8a8a8a" stroke-width="0.8"/>
<rect x="243.6" y="34.7" width="14.2" height="13.4" fill="#dbd9d3"/>
<rect x="245.2" y="37.1" width="9.6" height="9.2" rx="0.8" fill="#6e6e6e"/>
<rect x="247.6" y="36.1" width="4.8" height="2.4" fill="#e4e4e4" stroke="#707070" stroke-width="0.6"/>
<rect x="250.4" y="41.300000000000004" width="5.6" height="5.4" fill="#ecece8" stroke="#7e7e7e" stroke-width="0.8"/>
<rect x="263.3" y="34.7" width="14.2" height="13.4" fill="#dbd9d3"/>
<path d="M265.90000000000003,36.900000000000006 L274.7,45.7 M274.3,36.900000000000006 L266.1,45.7" stroke="#767676" stroke-width="1.2" fill="none"/>
<rect x="283.0" y="34.7" width="14.2" height="13.4" fill="#dbd9d3"/>
<rect x="285" y="39.300000000000004" width="8.2" height="7.4" fill="#e4e4e0" stroke="#7a7a7a" stroke-width="0.9"/>
<path d="M285,41.900000000000006 h8.2 M285,44.300000000000004 h8.2 M289,41.900000000000006 v4.8" stroke="#7a7a7a" stroke-width="0.8"/>
<rect x="289.6" y="36.300000000000004" width="5.6" height="3.8" fill="#d6d6d2" stroke="#808080" stroke-width="0.8"/><path d="M295.6,36.7 v9.6" stroke="#f6f6f6" stroke-width="1"/>
<rect x="302.7" y="34.7" width="14.2" height="13.4" fill="#dbd9d3"/>
<path d="M306.7,42.300000000000004 q3.4,-3.4 6.4,-0.6 q1,1.4 -1,2.8" fill="none" stroke="#a2a2a2" stroke-width="1.1"/><path d="M305.7,39.7 v3.6 h3.6" fill="none" stroke="#a2a2a2" stroke-width="1.1"/>
<rect x="328.5" y="34.7" width="14.2" height="13.4" fill="#dbd9d3"/>
<path d="M330.9,41.5 l4,-3.6 v2.4 h5 v2.4 h-5 v2.4 z" fill="#9c9c9c"/>
<rect x="348.3" y="34.7" width="14.2" height="13.4" fill="#dbd9d3"/>
<path d="M360.1,41.5 l-4,-3.6 v2.4 h-5 v2.4 h5 v2.4 z" fill="#9c9c9c"/>
<rect x="368.0" y="34.7" width="14.2" height="13.4" fill="#dbd9d3"/>
<rect x="369.6" y="38.300000000000004" width="11" height="7.6" rx="0.8" fill="#161616"/>
<rect x="372.6" y="36.7" width="4.8" height="2.2" fill="#161616"/><rect x="370.2" y="37.300000000000004" width="1.6" height="1.2" fill="#161616"/><rect x="378.6" y="37.300000000000004" width="1.4" height="1.2" fill="#161616"/>
<circle cx="375.1" cy="42.2" r="2.5" fill="#8e8e8e" stroke="#e8e8e8" stroke-width="0.7"/><rect x="370.6" y="39.7" width="1" height="5" fill="#d0d0d0"/><rect x="378.8" y="39.7" width="1" height="5" fill="#d0d0d0"/>
<path d="M387.6,39.2 h6.2 l-3.1,3.2 z" fill="#141414"/>
<rect x="400.2" y="34.7" width="14.2" height="13.4" fill="#dbd9d3"/>
<text x="407.3" y="45.900000000000006" text-anchor="middle" style="font:bold 12.6px 'Liberation Serif',serif;fill:#141414">Σ</text>
<path d="M419.6,39.2 h6.2 l-3.1,3.2 z" fill="#141414"/>
<rect x="432.6" y="34.7" width="14.2" height="13.4" fill="#dbd9d3"/>
<path d="M434.40000000000003,37.300000000000004 q3,-1.4 5,0.6 v8.6 q-2,-1.6 -5,-0.6 z" fill="#3a62d8"/><path d="M444.8,37.300000000000004 q-3,-1.4 -5,0.6 v8.6 q2,-1.6 5,-0.6 z" fill="#5a86ea"/>
<rect x="439.40000000000003" y="36.1" width="1.2" height="11.6" fill="#1c2c6c"/><rect x="441.8" y="38.1" width="1.6" height="6.4" fill="#c8d8f8"/><rect x="436.0" y="38.7" width="1.6" height="4" fill="#9cb4f0"/>
</svg>
<div id="status" class="abs">
<div class="sb" style="left:0;width:71px"><span style="left:4px"><span style="font-size:7.66px">CommPort:COM4</span></span></div>
<div class="sb" style="left:73px;width:14px;background:#e4e4e2"><i style="position:absolute;left:3.5px;top:1.6px;width:6px;height:5.6px;border-radius:50%;background:#f01010"></i></div>
<div class="sb" style="left:87px;width:91.5px"><span style="left:4px"><span style="letter-spacing:0.61px">Status:Disconnected</span></span></div>
<div class="sb" style="left:181.5px;width:112.5px"><span style="left:3.3px"><span style="letter-spacing:0.30px">Analyse-Mode:Independent</span></span></div>
<div class="sb" style="left:297px;width:98px"><span style="left:2.6px"><span style="letter-spacing:0.31px">Instrument:Winner319C</span></span></div>
<div class="sb" style="left:397.5px;width:103px"><span style="left:3px"><span style="letter-spacing:0.54px">Test Range:1.0-2000</span><span class="mu">μ</span><span class="m1">m</span></span></div>
<div class="sb" style="left:504px;width:81.5px"><span style="left:2.8px"><span style="letter-spacing:0.32px">Cumulate Times:10</span></span></div>
<div class="sb" style="left:588px;width:397px"><span style="left:3px"><span style="letter-spacing:0.68px">Jinan Winner Particle Technology Co.,Ltd</span></span></div>
</div>
<div id="botline" class="abs"></div>
<div id="rb" class="abs"></div>
</body></html>
